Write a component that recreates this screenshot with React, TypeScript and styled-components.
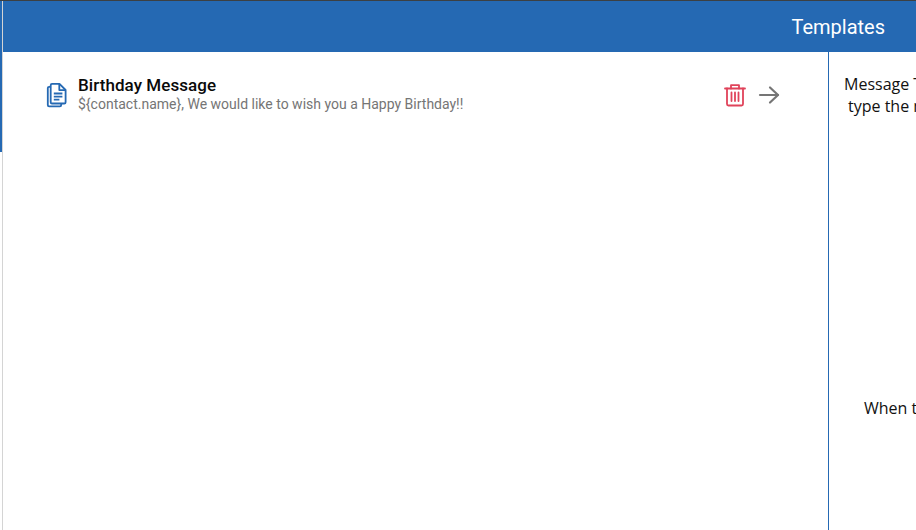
import React from "react";
import styled, { createGlobalStyle } from "styled-components";

const GlobalStyle = createGlobalStyle`
  html, body {
    margin: 0;
    padding: 0;
    width: 100%;
    height: 100%;
    overflow: hidden;
    background: #fff;
  }
  #root {
    height: 100%;
  }
`;

const Page = styled.div`
  width: 916px;
  height: 530px;
  display: flex;
  flex-direction: column;
  overflow: hidden;
  border-top: 1px solid #3c4043;
  box-sizing: border-box;
`;

const Frame = styled.div`
  flex: 1;
  display: flex;
  min-height: 0;
`;

const Rail = styled.div`
  width: 3px;
  flex-shrink: 0;
  box-sizing: border-box;
  border-right: 1px solid #d4d4d4;
`;

const RailMarker = styled.div`
  width: 2px;
  height: 151px;
  background: #2569b3;
`;

const Content = styled.div`
  flex: 1;
  min-width: 0;
  display: flex;
  flex-direction: column;
`;

const Header = styled.header`
  height: 51px;
  flex-shrink: 0;
  background: #2569b3;
  display: flex;
  align-items: center;
  justify-content: flex-end;
  padding-right: 31px;
`;

const HeaderTitle = styled.h1`
  margin: 0;
  font-family: Roboto, sans-serif;
  font-size: 20px;
  font-weight: 400;
  color: #fff;
`;

const Body = styled.div`
  flex: 1;
  display: flex;
  min-height: 0;
`;

const ListPane = styled.main`
  width: 825px;
  flex-shrink: 0;
  box-sizing: border-box;
  padding: 23px 48px 0 43px;
`;

const TemplateRow = styled.div`
  display: flex;
  align-items: center;
  height: 40px;
`;

const DocIcon = styled.svg`
  width: 22px;
  height: 26px;
  flex-shrink: 0;
  margin-right: 10px;
  color: #2569b3;
`;

const RowText = styled.div`
  flex: 1;
  min-width: 0;
`;

const RowTitle = styled.div`
  font-family: Roboto, sans-serif;
  font-size: 17px;
  font-weight: 500;
  line-height: 19px;
  letter-spacing: 0.06px;
  color: #0a0a0a;
`;

const RowSubtitle = styled.div`
  font-family: Roboto, sans-serif;
  font-size: 14px;
  line-height: 19px;
  color: #757575;
`;

const RowActions = styled.div`
  display: flex;
  align-items: center;
  gap: 12px;
`;

const TrashIcon = styled.svg`
  width: 22px;
  height: 24px;
  color: #e0435a;
`;

const ArrowIcon = styled.svg`
  width: 22px;
  height: 20px;
  color: #757575;
`;

const HelpPane = styled.aside`
  flex: 1;
  min-width: 0;
  border-left: 1px solid #2569b3;
  overflow: hidden;
  font-family: "Open Sans", sans-serif;
  font-size: 16px;
  line-height: 22px;
  color: #111;
  white-space: nowrap;
  padding-top: 21px;
`;

const HelpLine = styled.div<{ $indent: number }>`
  padding-left: ${(p) => p.$indent}px;
`;

const HelpGap = styled.div`
  height: 280px;
`;

export default function App() {
  return (
    <Page>
      <GlobalStyle />
      <Frame>
        <Rail>
          <RailMarker />
        </Rail>
        <Content>
          <Header>
            <HeaderTitle>Templates</HeaderTitle>
          </Header>
          <Body>
            <ListPane>
              <TemplateRow>
                <DocIcon viewBox="0 0 22 26" fill="none" stroke="currentColor" strokeWidth="1.8" strokeLinejoin="round">
                  <path d="M6 1.9h7.5L19.6 8v12.2a1.3 1.3 0 0 1-1.3 1.3H6a1.3 1.3 0 0 1-1.3-1.3V3.2A1.3 1.3 0 0 1 6 1.9Z" />
                  <path d="M13.3 1.9v6.2h6.3" />
                  <path d="M4.7 4.8H3.1a1.3 1.3 0 0 0-1.3 1.3v17a1.3 1.3 0 0 0 1.3 1.3h10.8a1.3 1.3 0 0 0 1.3-1.3v-1.6" />
                  <path d="M7.8 11.5h8.6M7.8 14.6h8.6M7.8 17.7h5.6" />
                </DocIcon>
                <RowText>
                  <RowTitle>Birthday Message</RowTitle>
                  <RowSubtitle>{"${contact.name}, We would like to wish you a Happy Birthday!!"}</RowSubtitle>
                </RowText>
                <RowActions>
                  <TrashIcon viewBox="0 0 22 24" fill="none" stroke="currentColor" strokeWidth="1.8" strokeLinejoin="round" strokeLinecap="round">
                    <path d="M1 5.5h20" />
                    <path d="M7 5.5V2.2h8v3.3" />
                    <path d="M3 5.5v15.6a1.4 1.4 0 0 0 1.4 1.4h13.2a1.4 1.4 0 0 0 1.4-1.4V5.5" />
                    <path d="M7.5 9.5v8.5M11 9.5v8.5M14.5 9.5v8.5" />
                  </TrashIcon>
                  <ArrowIcon viewBox="0 0 22 20" fill="none" stroke="currentColor" strokeWidth="2.2" strokeLinecap="round" strokeLinejoin="round">
                    <path d="M2 10h18" />
                    <path d="M12 2.5 20 10l-8 7.5" />
                  </ArrowIcon>
                </RowActions>
              </TemplateRow>
            </ListPane>
            <HelpPane>
              <HelpLine $indent={15}>Message Templates</HelpLine>
              <HelpLine $indent={19}>type the message</HelpLine>
              <HelpGap />
              <HelpLine $indent={35}>When the</HelpLine>
            </HelpPane>
          </Body>
        </Content>
      </Frame>
    </Page>
  );
}
